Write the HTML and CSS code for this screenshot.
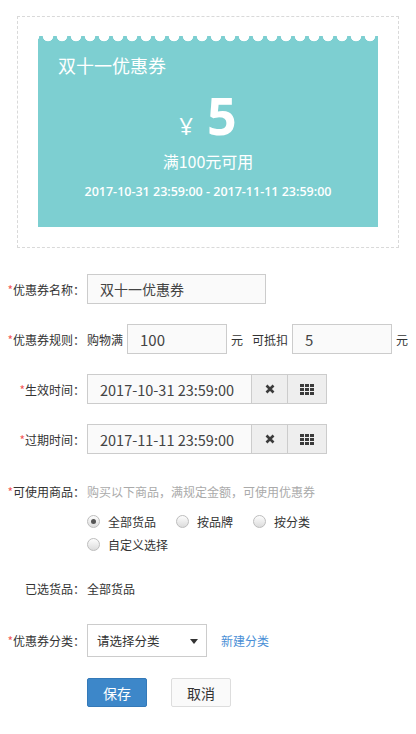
FILE: index.html
```html
<!DOCTYPE html>
<html lang="zh-CN">
<head>
  <meta charset="UTF-8">
  <title>优惠券</title>
  <link rel="stylesheet" href="styles.css">
</head>
<body>
  <div class="preview">
    <div class="cupon">
      <div class="cupon-titulo">双十一优惠券</div>
      <div class="cupon-monto"><span class="yen">¥</span><span class="valor">5</span></div>
      <div class="cupon-regla">满100元可用</div>
      <div class="cupon-fecha">2017-10-31 23:59:00 - 2017-11-11 23:59:00</div>
    </div>
  </div>

  <div class="form">
    <div class="fila">
      <label class="etiqueta"><i>*</i>优惠券名称：</label>
      <input class="campo nombre" type="text" value="双十一优惠券">
    </div>

    <div class="fila">
      <label class="etiqueta"><i>*</i>优惠券规则：</label>
      <span class="texto">购物满</span>
      <input class="campo corto" type="text" value="100">
      <span class="texto unidad">元</span>
      <span class="texto">可抵扣</span>
      <input class="campo corto" type="text" value="5">
      <span class="texto unidad">元</span>
    </div>

    <div class="fila">
      <label class="etiqueta"><i>*</i>生效时间：</label>
      <div class="fecha">
        <input class="campo" type="text" value="2017-10-31 23:59:00">
        <span class="btn-addon">
          <svg width="10" height="10" viewBox="0 0 10 10"><path d="M1.5 1.5L8.5 8.5M8.5 1.5L1.5 8.5" stroke="#3a3a3a" stroke-width="2.6"/></svg>
        </span>
        <span class="btn-addon">
          <svg width="14" height="11" viewBox="0 0 14 11"><g fill="#3a3a3a"><rect x="0" y="0" width="4" height="3"/><rect x="5" y="0" width="4" height="3"/><rect x="10" y="0" width="4" height="3"/><rect x="0" y="4" width="4" height="3"/><rect x="5" y="4" width="4" height="3"/><rect x="10" y="4" width="4" height="3"/><rect x="0" y="8" width="4" height="3"/><rect x="5" y="8" width="4" height="3"/><rect x="10" y="8" width="4" height="3"/></g></svg>
        </span>
      </div>
    </div>

    <div class="fila">
      <label class="etiqueta"><i>*</i>过期时间：</label>
      <div class="fecha">
        <input class="campo" type="text" value="2017-11-11 23:59:00">
        <span class="btn-addon">
          <svg width="10" height="10" viewBox="0 0 10 10"><path d="M1.5 1.5L8.5 8.5M8.5 1.5L1.5 8.5" stroke="#3a3a3a" stroke-width="2.6"/></svg>
        </span>
        <span class="btn-addon">
          <svg width="14" height="11" viewBox="0 0 14 11"><g fill="#3a3a3a"><rect x="0" y="0" width="4" height="3"/><rect x="5" y="0" width="4" height="3"/><rect x="10" y="0" width="4" height="3"/><rect x="0" y="4" width="4" height="3"/><rect x="5" y="4" width="4" height="3"/><rect x="10" y="4" width="4" height="3"/><rect x="0" y="8" width="4" height="3"/><rect x="5" y="8" width="4" height="3"/><rect x="10" y="8" width="4" height="3"/></g></svg>
        </span>
      </div>
    </div>

    <div class="fila fila-texto">
      <label class="etiqueta"><i>*</i>可使用商品：</label>
      <span class="ayuda">购买以下商品，满规定金额，可使用优惠券</span>
    </div>

    <div class="radios">
      <span class="radio"><span class="circulo marcado"></span>全部货品</span>
      <span class="radio"><span class="circulo"></span>按品牌</span>
      <span class="radio"><span class="circulo"></span>按分类</span>
      <span class="radio"><span class="circulo"></span>自定义选择</span>
    </div>

    <div class="fila fila-texto seleccion">
      <label class="etiqueta">已选货品：</label>
      <span class="texto">全部货品</span>
    </div>

    <div class="fila categoria">
      <label class="etiqueta"><i>*</i>优惠券分类：</label>
      <div class="select">请选择分类<span class="flecha"></span></div>
      <a href="#" class="nuevo">新建分类</a>
    </div>

    <div class="acciones">
      <button class="btn guardar">保存</button>
      <button class="btn cancelar">取消</button>
    </div>
  </div>
</body>
</html>
```

FILE: styles.css
```css
body {
  margin: 0;
  font-family: "Noto Sans CJK SC", "Noto Sans", sans-serif;
  font-size: 12px;
  color: #333;
  background: #fff;
}

/* vista previa del cupon */
.preview {
  width: 340px;
  margin: 16px 0 0 17px;
  padding: 19px 20px 20px;
  border: 1px dashed #d9d9d9;
}

.cupon {
  height: 191px;
  padding: 16px 20px 0;
  box-sizing: border-box;
  background-color: #7dcfd1;
  background-image: radial-gradient(circle at 7px 0, #fff 5px, transparent 5.6px);
  background-size: 14px 7px;
  background-position: 3px 0;
  background-repeat: repeat-x;
  color: #fff;
}

.cupon-titulo {
  font-size: 18px;
  line-height: 26px;
}

.cupon-monto {
  text-align: center;
  margin-top: 11px;
  height: 52px;
  font-family: "Open Sans", sans-serif;
  font-size: 52px;
  line-height: 52px;
}

.yen {
  font-size: 24px;
  line-height: 1;
  margin-right: 14px;
}

.valor {
  font-weight: bold;
}

.cupon-regla {
  text-align: center;
  font-size: 16px;
  margin-top: 9px;
  line-height: 22px;
}

.cupon-fecha {
  text-align: center;
  font-family: "Open Sans", sans-serif;
  font-size: 12.5px;
  font-weight: 600;
  line-height: 18px;
  margin-top: 11px;
  white-space: nowrap;
}

/* formulario */
.form {
  margin-top: 26px;
}

.fila {
  display: flex;
  align-items: center;
  height: 30px;
  margin-bottom: 20px;
}

.etiqueta {
  width: 85px;
  padding-right: 2px;
  flex-shrink: 0;
  text-align: right;
  white-space: nowrap;
}

.etiqueta i {
  font-style: normal;
  color: #f25a5a;
}

.campo {
  box-sizing: border-box;
  height: 30px;
  border: 1px solid #ccc;
  background: #fafafa;
  padding: 0 12px;
  font-family: "Noto Sans CJK SC", sans-serif;
  font-size: 14.5px;
  color: #444;
  outline: none;
}

.nombre {
  width: 179px;
  font-size: 14px;
}

.corto {
  width: 100px;
  margin-left: 4px;
  font-size: 15px;
}

.texto {
  white-space: nowrap;
}

.unidad {
  margin: 0 9px 0 4px;
}

.fecha {
  display: flex;
}

.fecha .campo {
  width: 165px;
}

.btn-addon {
  display: flex;
  align-items: center;
  justify-content: center;
  box-sizing: border-box;
  width: 37px;
  height: 30px;
  margin-left: -1px;
  border: 1px solid #ccc;
  background: #eee;
}

.btn-addon + .btn-addon {
  width: 40px;
}

.fila-texto {
  height: 20px;
  margin-top: 27px;
  margin-bottom: 0;
}

.ayuda {
  color: #aaa;
  white-space: nowrap;
}

.radios {
  display: flex;
  flex-wrap: wrap;
  width: 260px;
  margin: 9px 0 0 87px;
}

.radio {
  display: flex;
  align-items: center;
  height: 23px;
  margin-right: 20px;
  white-space: nowrap;
}

.circulo {
  box-sizing: border-box;
  width: 13px;
  height: 13px;
  margin: 0 8px 0 0;
  border: 1px solid #bdbdbd;
  border-radius: 50%;
  background: linear-gradient(#fdfdfd, #dcdcdc);
  position: relative;
}

.marcado::after {
  content: "";
  position: absolute;
  left: 3px;
  top: 3px;
  width: 5px;
  height: 5px;
  border-radius: 50%;
  background: #555;
}

.seleccion {
  margin-top: 22px;
}

.categoria {
  height: 33px;
  margin-top: 26px;
  margin-bottom: 0;
}

.select {
  position: relative;
  box-sizing: border-box;
  width: 120px;
  height: 33px;
  line-height: 31px;
  padding-left: 9px;
  border: 1px solid #ccc;
  font-size: 12.5px;
  color: #333;
}

.flecha {
  position: absolute;
  right: 8px;
  top: 14px;
  border-left: 4px solid transparent;
  border-right: 4px solid transparent;
  border-top: 5px solid #333;
}

.nuevo {
  margin-left: 14px;
  color: #4a8fd6;
  text-decoration: none;
}

.acciones {
  display: flex;
  gap: 24px;
  margin: 21px 0 0 87px;
}

.btn {
  box-sizing: border-box;
  width: 60px;
  height: 29px;
  font-family: "Noto Sans CJK SC", sans-serif;
  font-size: 14px;
  border-radius: 2px;
  cursor: pointer;
}

.guardar {
  background: #3d87c9;
  border: 1px solid #3479b8;
  color: #fff;
}

.cancelar {
  background: #fafafa;
  border: 1px solid #ddd;
  color: #333;
}
```
